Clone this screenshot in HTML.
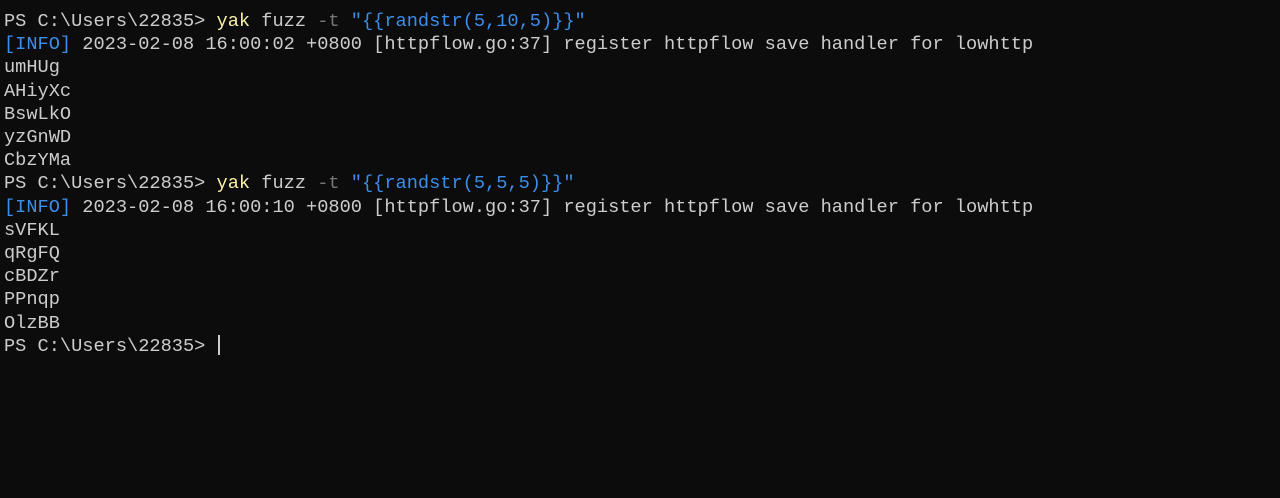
<!DOCTYPE html>
<html><head><meta charset="utf-8"><style>
html,body{margin:0;padding:0;background:#0c0c0c;width:1280px;height:498px;overflow:hidden}
pre{margin:0;padding:10px 0 0 4px;font-family:"Liberation Mono",monospace;font-size:18.65px;line-height:23.2px;color:#cccccc;white-space:pre}
.y{color:#f9f1a5}.g{color:#767676}.b{color:#3b8eea}.c{display:inline-block;width:2px;height:20px;background:#cccccc;vertical-align:-4px;margin-left:1px}
</style></head><body><pre>PS C:\Users\22835&gt; <span class="y">yak</span> fuzz <span class="g">-t</span> <span class="b">"{{randstr(5,10,5)}}"</span>
<span class="b">[INFO]</span> 2023-02-08 16:00:02 +0800 [httpflow.go:37] register httpflow save handler for lowhttp
umHUg
AHiyXc
BswLkO
yzGnWD
CbzYMa
PS C:\Users\22835&gt; <span class="y">yak</span> fuzz <span class="g">-t</span> <span class="b">"{{randstr(5,5,5)}}"</span>
<span class="b">[INFO]</span> 2023-02-08 16:00:10 +0800 [httpflow.go:37] register httpflow save handler for lowhttp
sVFKL
qRgFQ
cBDZr
PPnqp
OlzBB
PS C:\Users\22835&gt; <span class="c"></span></pre></body></html>
